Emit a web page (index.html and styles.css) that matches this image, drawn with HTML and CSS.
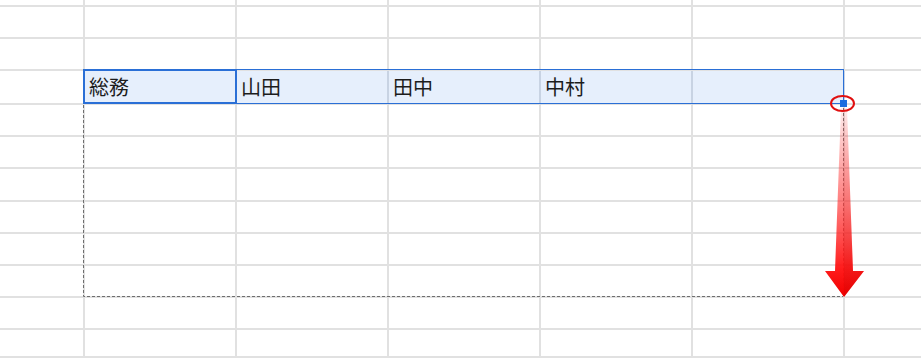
FILE: index.html
```html
<!DOCTYPE html>
<html lang="ja">
<head>
<meta charset="utf-8">
<title>シート</title>
<link rel="stylesheet" href="styles.css">
</head>
<body>
<div class="page">
  <div class="sheet">
    <!-- row 1 (cut off at top) -->
    <div class="cell"></div><div class="cell"></div><div class="cell"></div><div class="cell"></div><div class="cell"></div><div class="cell"></div><div class="cell last"></div>
    <div class="cell"></div><div class="cell"></div><div class="cell"></div><div class="cell"></div><div class="cell"></div><div class="cell"></div><div class="cell last"></div>
    <div class="cell"></div><div class="cell"></div><div class="cell"></div><div class="cell"></div><div class="cell"></div><div class="cell"></div><div class="cell last"></div>
    <!-- selected row -->
    <div class="cell"></div>
    <div class="cell sel">総務</div>
    <div class="cell sel">山田</div>
    <div class="cell sel">田中</div>
    <div class="cell sel">中村</div>
    <div class="cell sel"></div>
    <div class="cell last"></div>
    <div class="cell"></div><div class="cell"></div><div class="cell"></div><div class="cell"></div><div class="cell"></div><div class="cell"></div><div class="cell last"></div>
    <div class="cell"></div><div class="cell"></div><div class="cell"></div><div class="cell"></div><div class="cell"></div><div class="cell"></div><div class="cell last"></div>
    <div class="cell"></div><div class="cell"></div><div class="cell"></div><div class="cell"></div><div class="cell"></div><div class="cell"></div><div class="cell last"></div>
    <div class="cell"></div><div class="cell"></div><div class="cell"></div><div class="cell"></div><div class="cell"></div><div class="cell"></div><div class="cell last"></div>
    <div class="cell"></div><div class="cell"></div><div class="cell"></div><div class="cell"></div><div class="cell"></div><div class="cell"></div><div class="cell last"></div>
    <div class="cell"></div><div class="cell"></div><div class="cell"></div><div class="cell"></div><div class="cell"></div><div class="cell"></div><div class="cell last"></div>
    <div class="cell"></div><div class="cell"></div><div class="cell"></div><div class="cell"></div><div class="cell"></div><div class="cell"></div><div class="cell last"></div>
    <div class="cell"></div><div class="cell"></div><div class="cell"></div><div class="cell"></div><div class="cell"></div><div class="cell"></div><div class="cell last"></div>
  </div>

  <!-- selection range and active cell outlines -->
  <div class="range"></div>
  <div class="active"></div>

  <!-- copy marquee, fill handle and drag hint -->
  <svg class="marks" width="921" height="358" viewBox="0 0 921 358">
    <defs>
      <linearGradient id="arrowFill" x1="0" y1="108" x2="0" y2="297" gradientUnits="userSpaceOnUse">
        <stop offset="0" stop-color="#ff3030" stop-opacity="0.08"/>
        <stop offset="0.45" stop-color="#ff3a3a" stop-opacity="0.6"/>
        <stop offset="0.85" stop-color="#ff1010" stop-opacity="0.95"/>
        <stop offset="1" stop-color="#f00000" stop-opacity="1"/>
      </linearGradient>
      <linearGradient id="arrowShade" x1="0" y1="108" x2="0" y2="297" gradientUnits="userSpaceOnUse">
        <stop offset="0" stop-color="#c00000" stop-opacity="0"/>
        <stop offset="1" stop-color="#b00000" stop-opacity="0.18"/>
      </linearGradient>
    </defs>
    <path class="dash" d="M83.5 105 V296.5 H843"/>
    <path class="dash" d="M843.5 108 V296"/>
    <polygon fill="url(#arrowFill)" points="841,108 847,108 853,271 864,271 844,297 825,271 835,271"/>
    <polygon fill="url(#arrowShade)" points="844,108 847,108 853,271 864,271 844,297"/>
    <ellipse class="ring" cx="842.5" cy="103.5" rx="11.5" ry="7.5"/>
    <rect class="handle" x="840" y="100" width="7" height="7"/>
  </svg>
</div>
</body>
</html>
```

FILE: styles.css
```css
html, body {
  margin: 0;
  padding: 0;
  background: #ffffff;
}

.page {
  position: relative;
  width: 921px;
  height: 358px;
  overflow: hidden;
}

.sheet {
  display: grid;
  grid-template-columns: 85px repeat(5, 152px) 76px;
  grid-template-rows: 7px 32px 32px 34px 32px 32px 33px 32px 32px 32px 32px 28px;
  font-family: "Noto Sans CJK JP", "Noto Sans", sans-serif;
  font-size: 20px;
  color: #1c1c1c;
}

.cell {
  box-sizing: border-box;
  border-right: 2px solid #e1e1e1;
  border-bottom: 2px solid #e1e1e1;
  display: flex;
  align-items: flex-end;
  padding: 0 0 4px 4px;
  line-height: 24px;
  white-space: nowrap;
  overflow: hidden;
}

.cell.last {
  border-right: none;
}

.cell.sel {
  background: #e6effc;
  border-right-color: #c8d3e3;
}

.range {
  position: absolute;
  left: 83px;
  top: 69px;
  width: 761px;
  height: 35px;
  box-sizing: border-box;
  border: 1px solid #2a6fd6;
}

.active {
  position: absolute;
  left: 83px;
  top: 69px;
  width: 154px;
  height: 35px;
  box-sizing: border-box;
  border: 2px solid #2a6fd6;
}

.marks {
  position: absolute;
  left: 0;
  top: 0;
}

.dash {
  fill: none;
  stroke: #6e6e6e;
  stroke-width: 1;
  stroke-dasharray: 3 2;
}

.ring {
  fill: none;
  stroke: #e01010;
  stroke-width: 2;
}

.handle {
  fill: #1a6ee0;
}
```
